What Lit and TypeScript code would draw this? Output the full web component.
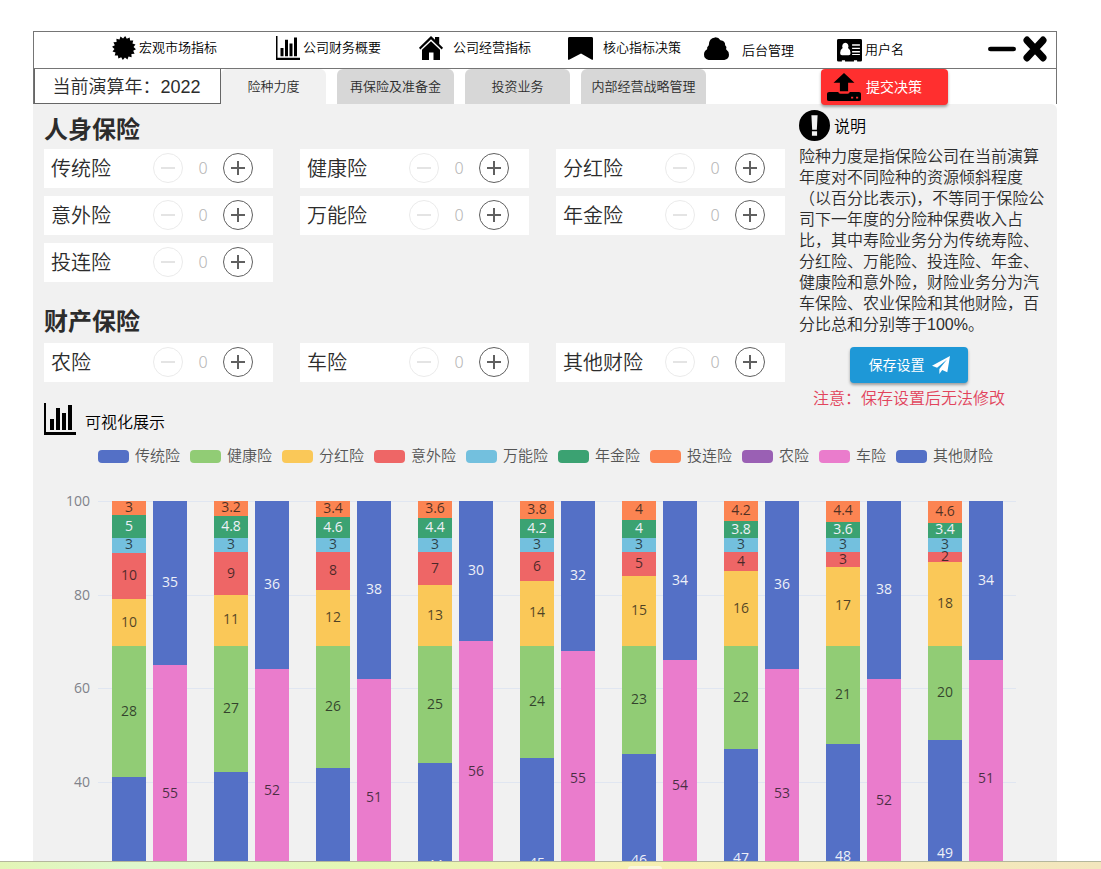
import { LitElement, html, svg, css } from "lit";
import { customElement, property, state } from "lit/decorators.js";

const C = {
  blue: "#5470c6",
  green: "#91cc75",
  yellow: "#fac858",
  red: "#ee6666",
  sky: "#73c0de",
  teal: "#3ba272",
  orange: "#fc8452",
  purple: "#9a60b4",
  pink: "#ea7ccc",
};

const LEGEND: [string, string][] = [
  ["传统险", C.blue], ["健康险", C.green], ["分红险", C.yellow], ["意外险", C.red],
  ["万能险", C.sky], ["年金险", C.teal], ["投连险", C.orange], ["农险", C.purple],
  ["车险", C.pink], ["其他财险", C.blue],
];

/* Stacks run from the top of the bar to its foot. */
const LIFE_COLOURS = [C.orange, C.teal, C.sky, C.red, C.yellow, C.green, C.blue];
const PROPERTY_COLOURS = [C.blue, C.pink, C.purple];
const YEARS: { life: number[]; property: number[] }[] = [
  { life: [3, 5, 3, 10, 10, 28, 41], property: [35, 55, 10] },
  { life: [3.2, 4.8, 3, 9, 11, 27, 42], property: [36, 52, 12] },
  { life: [3.4, 4.6, 3, 8, 12, 26, 43], property: [38, 51, 11] },
  { life: [3.6, 4.4, 3, 7, 13, 25, 44], property: [30, 56, 14] },
  { life: [3.8, 4.2, 3, 6, 14, 24, 45], property: [32, 55, 13] },
  { life: [4, 4, 3, 5, 15, 23, 46], property: [34, 54, 12] },
  { life: [4.2, 3.8, 3, 4, 16, 22, 47], property: [36, 53, 11] },
  { life: [4.4, 3.6, 3, 3, 17, 21, 48], property: [38, 52, 10] },
  { life: [4.6, 3.4, 3, 2, 18, 20, 49], property: [34, 51, 15] },
];

const burst = Array.from({ length: 32 }, (_, i) => {
  const a = (i * Math.PI) / 16 + Math.PI / 32;
  const r = i % 2 ? 9.6 : 12;
  return `${(12 + r * Math.cos(a)).toFixed(2)},${(12 + r * Math.sin(a)).toFixed(2)}`;
}).join(" ");

const ICONS = {
  burst: svg`<polygon points=${burst} />`,
  bars: svg`<path d="M0 0h1.500v21.800H24V24H0z"/><path d="M4.500 12h3v8.200h-3zM9 3.800h3v16.400H9zM13.500 7.500h3v12.700h-3zM18 1.500h3v18.700h-3z"/>`,
  home: svg`<path d="M12 0 16 3.800V1h4.200v7L24 11.700l-1.300 1.700L12 3.200 1.300 13.400 0 11.700z"/><path d="M12 5.200 21 13.700V24h-6.500v-7.500h-4.500V24H3V13.700z"/>`,
  bookmark: svg`<path d="M1.500 0h21Q24 0 24 1.500V23.200q0 1-1 .5L12.500 17.200 1 23.700q-1 .4-1-.5V1.500Q0 0 1.500 0z"/>`,
  cloud: svg`<path d="M4.500 24Q0 23 0 18.300 0 14.500 3 12.800 2.400 10.500 4.600 8.600 4.600 1 10.600.4 14 .2 15.800 3.500 20.500 4 20.300 8.500q2 1.800.9 4.200Q24 15 24 18.500 24 22.800 19.500 24z"/>`,
  card: svg`<path fill-rule="evenodd" d="M1.500 0h21Q24 0 24 1.500v20.600q0 1.400-1.500 1.400h-3.200v-1.400h-3v1.400H7.700v-1.400h-3v1.400H1.500Q0 23.500 0 22.100V1.500Q0 0 1.500 0zM8 4a3 3.600 0 0 0-2.600 5.400Q3 10.800 3 14.500 3 17 4.800 17h6.400q1.800 0 1.800-2.500 0-3.700-2.400-5.100A3 3.600 0 0 0 8 4zM14.500 5.500V7H22V5.500zM14.500 9v1.500H22V9zM14.500 12.500V14H22v-1.500zM14.500 15.600v1.200H22v-1.200z"/>`,
  minus: svg`<rect x="0" y="9.800" width="24" height="4.400" rx="2.200"/>`,
  close: svg`<path stroke="currentColor" stroke-width="7" stroke-linecap="round" d="M4 4l16 16M20 4 4 20"/>`,
  upload: svg`<path d="M12 0 19.400 8.500h-4.500V16H9.100V8.500H4.600z"/><path fill-rule="evenodd" d="M1.500 16.500H8q0 1.500 1.500 1.500h5q1.500 0 1.500-1.500h6.500q1.500 0 1.500 1.500v5q0 1.400-1.500 1.400h-21Q0 24.400 0 23v-5q0-1.500 1.500-1.500zm15.500 4.300v1.500h1.500v-1.500zm3.500 0v1.500H22v-1.500z"/>`,
  alert: svg`<path fill-rule="evenodd" d="M12 0a12 12 0 1 0 0 24 12 12 0 0 0 0-24zM9.600 4h4.800l-.6 11.200h-3.600zM10 16.500h4v3.500h-4z"/>`,
  send: svg`<path d="M24 0 20.400 21.500 13.600 18.700 9.800 24V17.200L20 4.600 6.800 15.800 0 13z"/>`,
};

const icon = (name: keyof typeof ICONS, cls: string, box = "0 0 24 24") =>
  html`<svg class="icon ${cls}" viewBox=${box} preserveAspectRatio="none" aria-hidden="true">${ICONS[name]}</svg>`;

const base = css`
  * { box-sizing: border-box; }
  button, input {
    font: inherit;
    color: inherit;
    margin: 0;
    padding: 0;
    border: 0;
    background: none;
  }
  button { cursor: pointer; }
  .icon { display: block; flex: none; fill: currentColor; }
`;

@customElement("ratio-stepper")
class RatioStepper extends LitElement {
  @property() label = "";
  @state() private value = 0;

  static styles = [base, css`
    :host {
      display: flex;
      align-items: center;
      height: 39px;
      padding: 0 20px 1px 7px;
      background: #fff;
      color: #2c2c2c;
    }
    .name { flex: 1; font-size: 20px; line-height: 28px; padding-top: 2px; white-space: nowrap; }
    .round {
      width: 30px;
      height: 30px;
      border: 1px solid #606060;
      border-radius: 50%;
      color: #606060;
      display: grid;
      place-items: center;
    }
    .round:disabled { border-color: #ebebeb; color: #e4e4e4; cursor: default; }
    .sign { width: 14px; height: 14px; }
    .value { width: 40px; text-align: center; font-size: 16px; color: #b4b4b4; font-family: "Noto Sans", sans-serif; }
  `];

  private step(d: number) {
    this.value = Math.min(100, Math.max(0, this.value + d));
  }

  render() {
    return html`
      <label class="name" for="v">${this.label}</label>
      <button class="round" aria-label="减少" ?disabled=${this.value === 0} @click=${() => this.step(-1)}>
        <svg class="icon sign" viewBox="0 0 14 14"><path d="M0 6h14v2H0z" /></svg>
      </button>
      <input class="value" id="v" readonly .value=${String(this.value)} />
      <button class="round" aria-label="增加" @click=${() => this.step(1)}>
        <svg class="icon sign" viewBox="0 0 14 14"><path d="M0 6h14v2H0zM6 0h2v14H6z" /></svg>
      </button>
    `;
  }
}

@customElement("ratio-chart")
class RatioChart extends LitElement {
  static styles = [base, css`
    :host { display: block; }
    .legend {
      display: flex;
      justify-content: center;
      gap: 10px;
      margin: 0;
      padding: 0 0 0 1px;
      list-style: none;
      font-size: 15px;
      line-height: 20px;
      color: #555;
      white-space: nowrap;
    }
    .key { display: flex; align-items: center; gap: 6px; }
    .swatch { width: 31px; height: 13px; border-radius: 4px; }
    .chart {
      display: flex;
      gap: 8px;
      margin: 35px 41px 0 0;
      font-family: "Open Sans", sans-serif;
      font-size: 14px;
      font-weight: 400;
      line-height: 14px;
    }
    .axis {
      width: 57px;
      height: 468px;
      display: flex;
      flex-direction: column;
      justify-content: space-between;
      text-align: right;
      color: #80828a;
    }
    .tick { height: 0; display: flex; align-items: center; justify-content: flex-end; }
    .plot {
      flex: 1;
      height: 468px;
      display: grid;
      grid-template-columns: repeat(9, 1fr);
      background: repeating-linear-gradient(#e0e6f1 0 1px, transparent 1px 20%);
    }
    .year { display: grid; grid-template-columns: 1fr 1fr; gap: 7px; padding: 0 13px 0 14px; }
    .stack { display: flex; flex-direction: column; }
    .part {
      min-height: 0;
      flex-basis: 0;
      display: flex;
      align-items: center;
      justify-content: center;
      color: rgba(20, 20, 20, 0.75);
    }
    .num { padding-bottom: 2px; }
    .light { color: #eef0f8; }
  `];

  private stack(values: number[], colours: string[]) {
    return html`<div class="stack">
      ${values.map((v, i) => html`<div
        class="part ${colours[i] === C.blue || colours[i] === C.teal ? "light" : ""}"
        style="flex-grow:${v};background:${colours[i]}"
      ><span class="num">${v}</span></div>`)}
    </div>`;
  }

  render() {
    return html`
      <ul class="legend">
        ${LEGEND.map(([name, colour]) => html`<li class="key"><span class="swatch" style="background:${colour}"></span>${name}</li>`)}
      </ul>
      <div class="chart">
        <div class="axis">${[100, 80, 60, 40, 20, 0].map((t) => html`<span class="tick">${t}</span>`)}</div>
        <div class="plot">
          ${YEARS.map((y) => html`<div class="year">${this.stack(y.life, LIFE_COLOURS)}${this.stack(y.property, PROPERTY_COLOURS)}</div>`)}
        </div>
      </div>
    `;
  }
}

@customElement("app-root")
class AppRoot extends LitElement {
  @state() private tab = 0;

  static styles = [base, css`
    :host {
      display: flex;
      flex-direction: column;
      height: 100vh;
      overflow: hidden;
      background: #fff;
      color: #2c2c2c;
      font-family: "Liberation Sans", "Noto Sans CJK SC", sans-serif;
      font-weight: 350;
    }
    .frame { flex: 1; min-height: 0; overflow: hidden; padding: 31px 44px 0 33px; }
    .top {
      display: grid;
      grid-template-columns: 164fr 143fr 149fr 136fr 133fr 151fr 59fr;
      align-items: center;
      height: 38px;
      padding: 0 9px 0 78px;
      border: 1px solid #757575;
      color: #000;
      font-size: 13px;
      line-height: 20px;
    }
    .link { display: flex; align-items: center; gap: 3px; padding-bottom: 4px; color: inherit; text-decoration: none; white-space: nowrap; }
    .wide { gap: 10px; }
    .wider { gap: 13px; }
    .low { padding-bottom: 0; }
    .dropped { padding-top: 6px; }
    .i-nav { width: 24px; height: 24px; }
    .i-nav-wide { width: 25px; height: 23px; }
    .window { display: flex; align-items: center; justify-content: flex-end; gap: 7px; padding-bottom: 2px; }
    .i-min { width: 28px; height: 24px; }
    .i-close { width: 24px; height: 26px; }
    .bar {
      display: flex;
      height: 35px;
      border: solid #757575;
      border-width: 0 1px;
    }
    .current {
      width: 187px;
      border: 1px solid #666;
      border-top: 0;
      margin: 0;
      text-align: center;
      font-size: 18px;
      line-height: 37px;
      white-space: nowrap;
      padding-right: 2px;
    }
    .tabs { display: grid; grid-template-columns: 105px 117px 105px 125px; gap: 11px; }
    .tab { background: #d7d7d7; border-radius: 6px 6px 0 0; font-size: 13px; line-height: 20px; white-space: nowrap; }
    .on { background: #f1f1f1; }
    .action {
      display: flex;
      align-items: center;
      height: 36px;
      border-radius: 4px;
      color: #fff;
      font-size: 14px;
      line-height: 20px;
      font-weight: 400;
      white-space: nowrap;
      box-shadow: 0 2px 3px rgba(0, 0, 0, 0.35);
    }
    .submit { position: relative; width: 127px; margin: 0 108px 0 auto; padding-left: 6px; gap: 5px; background: #ff2f2f; }
    .i-upload { width: 34px; height: 28px; color: #000; }
    .body { background: #f1f1f1; border-radius: 0 6px 0 0; padding: 6px 0 0; }
    .split { display: flex; gap: 14px; padding: 0 8px 0 11px; }
    .lines { flex: 1; }
    .h { margin: 0; font-size: 24px; line-height: 39px; font-weight: 700; }
    .second { margin-top: 20px; padding-bottom: 2px; }
    .cards { display: grid; grid-template-columns: repeat(3, 1fr); gap: 8px 27px; }
    .note { width: 250px; }
    .note-title { display: flex; align-items: center; gap: 4px; margin: 0; color: #000; font-size: 16px; line-height: 28px; font-weight: inherit; }
    .note-name { padding-top: 3px; }
    .i-alert { width: 31px; height: 31px; }
    .text { margin: 5px 0 12px; font-size: 16px; line-height: 21px; }
    .save-area { display: flex; flex-direction: column; align-items: center; gap: 5px; padding-right: 30px; }
    .save { width: 118px; gap: 7px; justify-content: center; background: #1e98d7; }
    .i-send { width: 18px; height: 18px; }
    .warning { margin: 0; color: #e2445c; font-size: 16px; line-height: 21px; }
    .chart-title { display: flex; align-items: center; gap: 9px; margin: 21px 0 11px; font-size: 16px; line-height: 24px; font-weight: inherit; color: #000; }
    .i-chart { width: 32px; height: 32px; }
    .chart-name { padding-top: 8px; }
    .dock {
      flex: none;
      height: 8px;
      display: flex;
      align-items: flex-end;
      padding-left: 57%;
      border-top: 1px solid #b4b79c;
      background: linear-gradient(90deg, #e3f5b6, #dff8cc 12%, #e4f7b4 32%, #f6f0b2 58%, #f3e6be);
    }
    .dock-item { width: 34px; height: 3px; border-radius: 3px 3px 0 0; background: #fbf7dc; }
  `];

  render() {
    const tabs = ["险种力度", "再保险及准备金", "投资业务", "内部经营战略管理"];
    return html`
      <div class="frame">
        <nav class="top">
          <a class="link" href="#">${icon("burst", "i-nav")}宏观市场指标</a>
          <a class="link" href="#">${icon("bars", "i-nav")}公司财务概要</a>
          <a class="link wide" href="#">${icon("home", "i-nav")}公司经营指标</a>
          <a class="link wide" href="#">${icon("bookmark", "i-nav-wide")}核心指标决策</a>
          <a class="link wider" href="#">${icon("cloud", "i-nav-wide")}<span class="dropped">后台管理</span></a>
          <a class="link low" href="#">${icon("card", "i-nav-wide")}用户名</a>
          <div class="window">
            <button aria-label="最小化">${icon("minus", "i-min")}</button>
            <button aria-label="关闭">${icon("close", "i-close")}</button>
          </div>
        </nav>
        <div class="bar">
          <p class="current">当前演算年：2022</p>
          <div class="tabs" role="tablist">
            ${tabs.map((t, i) => html`<button class="tab ${i === this.tab ? "on" : ""}" role="tab"
              aria-selected=${i === this.tab} @click=${() => (this.tab = i)}>${t}</button>`)}
          </div>
          <button class="action submit">${icon("upload", "i-upload", "0 0 24 24.4")}提交决策</button>
        </div>
        <main class="body">
          <div class="split">
            <div class="lines">
              <h2 class="h">人身保险</h2>
              <div class="cards">
                ${["传统险", "健康险", "分红险", "意外险", "万能险", "年金险", "投连险"].map((n) => html`<ratio-stepper .label=${n}></ratio-stepper>`)}
              </div>
              <h2 class="h second">财产保险</h2>
              <div class="cards">
                ${["农险", "车险", "其他财险"].map((n) => html`<ratio-stepper .label=${n}></ratio-stepper>`)}
              </div>
              <h3 class="chart-title">${icon("bars", "i-chart")}<span class="chart-name">可视化展示</span></h3>
            </div>
            <aside class="note">
              <h3 class="note-title">${icon("alert", "i-alert")}<span class="note-name">说明</span></h3>
              <p class="text">险种力度是指保险公司在当前演算年度对不同险种的资源倾斜程度（以百分比表示)，不等同于保险公司下一年度的分险种保费收入占比，其中寿险业务分为传统寿险、分红险、万能险、投连险、年金、健康险和意外险，财险业务分为汽车保险、农业保险和其他财险，百分比总和分别等于100%。</p>
              <div class="save-area">
                <button class="action save">保存设置${icon("send", "i-send")}</button>
                <p class="warning">注意：保存设置后无法修改</p>
              </div>
            </aside>
          </div>
          <ratio-chart></ratio-chart>
        </main>
      </div>
      <div class="dock"><span class="dock-item"></span></div>
    `;
  }
}
